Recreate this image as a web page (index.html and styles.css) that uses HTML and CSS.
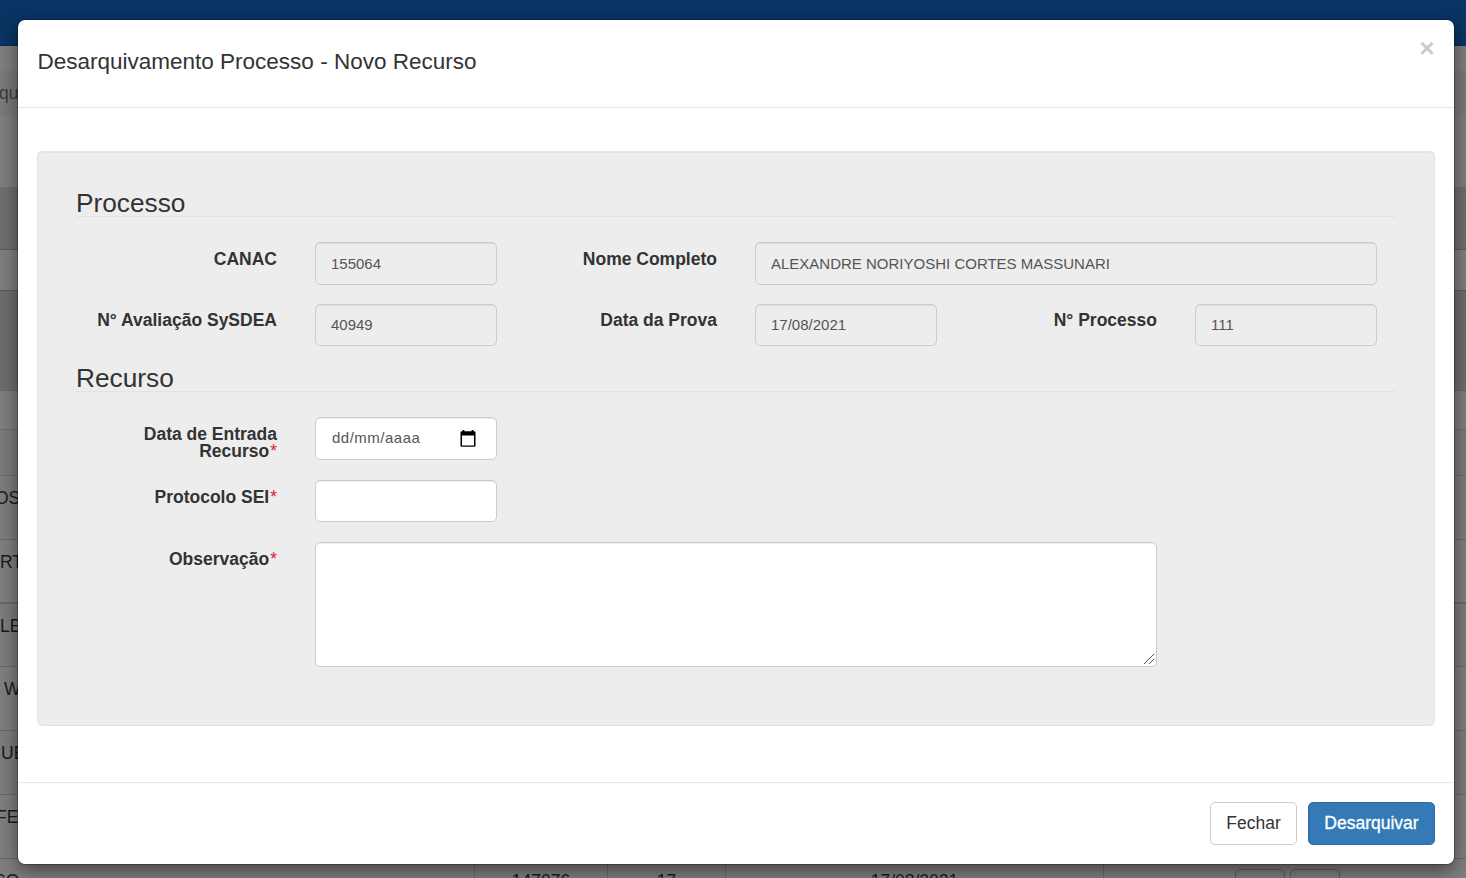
FILE: index.html
```html
<!DOCTYPE html>
<html lang="pt-BR">
<head>
<meta charset="utf-8">
<title>Desarquivamento Processo</title>
<link rel="stylesheet" href="styles.css">
</head>
<body>
<div class="page">
  <div class="navbar"></div>
  <div class="band gap"></div>
  <div class="band crumb"><span>qu</span></div>
  <div class="band intro"></div>
  <div class="band panel-head"></div>
  <div class="band filter"></div>
  <div class="band table-head"></div>
  <div class="band search"></div>
  <div class="band spacer"></div>
  <div class="row r1">OS</div>
  <div class="row r2">RT</div>
  <div class="row r3">LE</div>
  <div class="row r4">W</div>
  <div class="row r5">UE</div>
  <div class="row r6">FE</div>
  <div class="row last">
    <div class="cell name">SO</div>
    <div class="cell">147076</div>
    <div class="cell">17</div>
    <div class="cell">17/08/2021</div>
    <div class="cell actions"><i></i><i></i></div>
  </div>
</div>
<div class="modal">
  <div class="modal-header">
    <h4>Desarquivamento Processo - Novo Recurso</h4>
    <button class="close">×</button>
  </div>
  <div class="modal-body">
    <div class="well">
      <div class="legend">Processo</div>
      <div class="grid line1">
        <label>CANAC</label>
        <div class="field"><div class="control off">155064</div></div>
        <label>Nome Completo</label>
        <div class="field wide"><div class="control off">ALEXANDRE NORIYOSHI CORTES MASSUNARI</div></div>
      </div>
      <div class="grid line2">
        <label>N° Avaliação SySDEA</label>
        <div class="field"><div class="control off">40949</div></div>
        <label>Data da Prova</label>
        <div class="field"><div class="control off">17/08/2021</div></div>
        <label>N° Processo</label>
        <div class="field"><div class="control off">111</div></div>
      </div>
      <div class="legend second">Recurso</div>
      <div class="grid line3">
        <label>Data de Entrada Recurso<b class="req">*</b></label>
        <div class="field"><div class="control date"><span>dd/mm/aaaa</span>
          <svg width="16" height="17" viewBox="0 0 16 17"><path fill="#000" d="M2.6 0h1.8v1.3h7.2V0h1.8v1.3h.7c.8 0 1.4.6 1.4 1.4v12.7c0 .8-.6 1.4-1.4 1.4H1.9c-.8 0-1.4-.6-1.4-1.4V2.700c0-.8.6-1.400 1.400-1.400h.7zM2 5.500v9.900h12V5.500z"/></svg>
        </div></div>
      </div>
      <div class="grid line4">
        <label>Protocolo SEI<b class="req">*</b></label>
        <div class="field"><div class="control"></div></div>
      </div>
      <div class="grid line5">
        <label>Observação<b class="req">*</b></label>
        <div class="field area"><div class="control">
          <svg width="12" height="12" viewBox="0 0 12 12"><path stroke="#555" stroke-width="1" fill="none" d="M1 11 11 1M6 11l5-5"/></svg>
        </div></div>
      </div>
    </div>
  </div>
  <div class="modal-footer">
    <button class="btn">Fechar</button>
    <button class="btn primary">Desarquivar</button>
  </div>
</div>
</body>
</html>
```
FILE: styles.css
```css
* { box-sizing: border-box; }
body {
  margin: 0;
  width: 1466px;
  height: 878px;
  overflow: hidden;
  font-family: "Liberation Sans", Arial, sans-serif;
  font-size: 17.5px;
  color: #333;
}
.page { height: 878px; overflow: hidden; background: #7f7f7f; color: #1a1a1a; }
.navbar { height: 46px; background: #0a3464; border-bottom: 1px solid #082a51; }
.band { border-bottom: 1px solid #6b6b6b; }
.gap { height: 25px; border: 0; }
.crumb { height: 45px; border: 0; background: #7a7a7a; line-height: 44px; color: #3c3c3c; text-indent: -1px; }
.intro { height: 72px; border-bottom: 1px solid #6f6f6f; }
.panel-head { height: 62px; background: #6f6f6f; border-color: #5b5b5b; }
.filter { height: 41px; border-color: #5b5b5b; }
.table-head { height: 100px; background: #6e6e6e; border-color: #696969; }
.search { height: 39px; }
.spacer { height: 46px; background: #7b7b7b; }
.row { height: 64px; line-height: 45px; border-bottom: 1px solid #696969; background: #7f7f7f; white-space: nowrap; }
.r1, .r3, .r5 { background: #7d7d7d; }
.r1 { text-indent: -5px; }
.r2 { text-indent: 0; border-bottom-width: 2px; }
.r3 { text-indent: 0; height: 63px; }
.r4 { text-indent: 4px; }
.r5 { text-indent: 1px; }
.r6 { text-indent: -4px; }
.last { display: grid; grid-template-columns: 475px 133px 118px 378px 1fr; text-align: center; line-height: 43px; }
.cell { border-right: 1px solid #6b6b6b; padding-top: 1px; }
.name { text-align: left; text-indent: -6px; }
.actions { display: flex; gap: 5px; padding: 10px 0 0 131px; border: 0; }
.actions i { width: 50px; height: 42px; border: 1px solid #5f5f5f; border-radius: 5px; }

.modal {
  position: absolute;
  left: 18px;
  top: 20px;
  width: 1436px;
  height: 844px;
  display: flex;
  flex-direction: column;
  background: #fff;
  border-radius: 7px;
  box-shadow: 0 0 0 1px rgba(0, 0, 0, .25), 0 6px 19px rgba(0, 0, 0, .5);
}
.modal-header {
  height: 88px;
  padding: 18px 19.500px 0;
  display: flex;
  justify-content: space-between;
  border-bottom: 1px solid #e5e5e5;
}
h4 { margin: 11px 0 0; font-size: 22.5px; font-weight: 400; line-height: 25px; }
.close {
  height: 20px;
  padding: 0;
  border: 0;
  background: none;
  color: #ccc;
  font: bold 26.25px/20px "Liberation Sans", Arial, sans-serif;
}
.modal-body { flex: 1; padding: 43px 19px 0; }
.well {
  height: 575px;
  padding: 37px 38px 0;
  background: #ededed;
  border: 1px solid #e3e3e3;
  border-radius: 5px;
  box-shadow: inset 0 1px 1px rgba(0, 0, 0, .05);
}
.legend { height: 28px; font-size: 26.25px; line-height: 28px; border-bottom: 1px solid #e2e2e2; }
.second { margin-top: 18px; }
.grid { display: grid; grid-template-columns: repeat(12, 110px); }
.grid label { grid-column: span 2; padding: 9px 19px 0; font-weight: 700; line-height: 17px; text-align: right; }
.line2 label { padding-top: 8px; }
.field { grid-column: span 2; padding: 0 19px; }
.wide { grid-column: span 6; }
.area { grid-column: span 8; }
.control {
  height: 100%;
  padding: 0 15px;
  display: flex;
  align-items: center;
  background: #fff;
  border: 1px solid #ccc;
  border-radius: 5px;
  box-shadow: inset 0 1px 1px rgba(0, 0, 0, .075);
  color: #555;
  font-size: 15px;
}
.off { background: #ededed; }
.line2 .control { padding-bottom: 2px; }
.req { margin-left: 1px; color: #d9232e; font-weight: 400; }
.line1 { height: 43px; margin-top: 25px; }
.line2 { height: 42px; margin-top: 19px; }
.line3 { height: 43px; margin-top: 25px; }
.line4 { height: 42px; margin-top: 20px; }
.line5 { height: 125px; margin-top: 20px; }
.date { justify-content: space-between; padding: 0 20.500px 2px 16px; letter-spacing: .5px; }
.date svg { margin-top: 1px; }
.area .control { align-items: flex-end; justify-content: flex-end; padding: 0 1px 1px; }
.modal-footer {
  height: 82px;
  padding: 19px 19px 0;
  display: flex;
  justify-content: flex-end;
  gap: 11px;
  border-top: 1px solid #e5e5e5;
}
.btn {
  width: 87px;
  height: 43px;
  padding: 0 0 1px;
  background: #fff;
  border: 1px solid #ccc;
  border-radius: 5px;
  color: #333;
  font: 17.500px "Liberation Sans", Arial, sans-serif;
}
.primary { width: 127px; background: #337ab7; border-color: #2e6da4; color: #fff; -webkit-text-stroke: .3px #fff; }
```
